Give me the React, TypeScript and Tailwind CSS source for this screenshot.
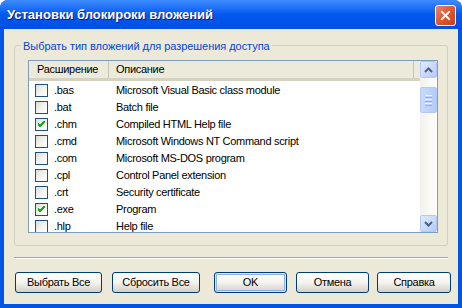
import { X } from 'lucide-react'

const rows = [
  { ext: '.bas', desc: 'Microsoft Visual Basic class module', checked: false },
  { ext: '.bat', desc: 'Batch file', checked: false },
  { ext: '.chm', desc: 'Compiled HTML Help file', checked: true },
  { ext: '.cmd', desc: 'Microsoft Windows NT Command script', checked: false },
  { ext: '.com', desc: 'Microsoft MS-DOS program', checked: false },
  { ext: '.cpl', desc: 'Control Panel extension', checked: false },
  { ext: '.crt', desc: 'Security certificate', checked: false },
  { ext: '.exe', desc: 'Program', checked: true },
  { ext: '.hlp', desc: 'Help file', checked: false },
]

function CheckBox({ checked }: { checked: boolean }) {
  return (
    <div className="w-[13px] h-[13px] border border-[#1C5180] bg-gradient-to-br from-[#DCDCD7] via-[#F2F2EE] to-white flex items-center justify-center">
      {checked && (
        <svg width="7" height="7" viewBox="0 0 7 7">
          <path d="M0 3 L2 5 L7 0 M0 4 L2 6 L7 1 M0 2 L2 4 L7 -1" stroke="#21A121" strokeWidth="1" fill="none" />
        </svg>
      )}
    </div>
  )
}

function XpButton({ label, w, isDefault }: { label: string; w: string; isDefault?: boolean }) {
  return (
    <button
      className={`${w} h-[21px] rounded-[3px] border border-[#003C74] bg-gradient-to-b from-white via-[#F4F3EE] to-[#D6D0C5] text-[11px] text-black leading-none ${
        isDefault ? 'shadow-[inset_0_0_0_1px_#CEE7FF,inset_0_0_0_2px_#8DB2E3]' : ''
      }`}
    >
      {label}
    </button>
  )
}

function ScrollArrow({ down }: { down?: boolean }) {
  return (
    <div className="h-[17px] w-[17px] rounded-[2px] border border-[#B4C8F6] bg-gradient-to-br from-[#E0EBFF] to-[#B3CBF8] flex items-center justify-center">
      <svg width="9" height="6" viewBox="0 0 9 6">
        <path d={down ? 'M1 1 L4.5 4.5 L8 1' : 'M1 5 L4.5 1.5 L8 5'} stroke="#4D6185" strokeWidth="2" fill="none" />
      </svg>
    </div>
  )
}

export default function App() {
  return (
    <div className="w-[462px] h-[308px] flex flex-col bg-[#0055E5] rounded-t-[8px] overflow-hidden font-[Liberation_Sans,Arial,sans-serif]">
      <div className="h-[29px] shrink-0 flex items-center justify-between pl-[7px] pr-[6px] bg-gradient-to-b from-[#3D8CFF] via-[#0058EE] to-[#0050E0]">
        <span className="text-white font-bold text-[13px] [text-shadow:1px_1px_#0A1883]">Установки блокироки вложений</span>
        <div className="w-[21px] h-[21px] mt-[1px] rounded-[3px] border border-white bg-gradient-to-br from-[#E8836A] via-[#E2552F] to-[#C5401E] flex items-center justify-center">
          <X size={15} strokeWidth={3} className="text-white" />
        </div>
      </div>

      <div className="flex-1 mx-[4px] mb-[4px] bg-[#ECE9D8] flex flex-col px-[10px] pt-[16px] text-[11px] tracking-[-0.3px] text-black">
        <div className="relative h-[201px] border border-[#D0D0BF] rounded-[3px] pt-[14px] pl-[13px]">
          <span className="absolute -top-[8px] left-[6px] px-[2px] bg-[#ECE9D8] text-[#0046D5] text-[11px] tracking-[-0.05px]">
            Выбрать тип вложений для разрешения доступа
          </span>

          <div className="w-[410px] h-[173px] border border-[#7F9DB9] bg-white flex overflow-hidden">
            <div className="flex-1 flex flex-col overflow-hidden">
              <div className="h-[20px] shrink-0 flex items-center bg-[#EBEADB] border-b-[3px] border-[#D6D2C2]">
                <div className="w-[80px] h-full flex items-center pl-[8px] border-r border-[#C7C5B2]">Расширение</div>
                <div className="w-[305px] h-full flex items-center pl-[7px] border-r border-[#C7C5B2]">Описание</div>
              </div>
              <div className="h-[1px] shrink-0" />
              {rows.map((r) => (
                <div key={r.ext} className="h-[17px] shrink-0 flex items-center">
                  <div className="w-[80px] flex items-center pl-[6px]">
                    <CheckBox checked={r.checked} />
                    <span className="ml-[6px]">{r.ext}</span>
                  </div>
                  <span className="pl-[7px]">{r.desc}</span>
                </div>
              ))}
            </div>
            <div className="w-[17px] shrink-0 flex flex-col bg-gradient-to-r from-[#F3F1EC] to-[#FEFEFB]">
              <ScrollArrow />
              <div className="flex-1 pt-[9px]">
                <div className="h-[26px] w-[17px] rounded-[2px] border border-[#B4C8F6] bg-gradient-to-r from-[#C9DAFC] to-[#B3CBF8] flex flex-col items-center justify-center gap-[1px]">
                  <div className="w-[7px] h-[1px] bg-[#EEF4FE]" />
                  <div className="w-[7px] h-[1px] bg-[#8CB0F8]" />
                  <div className="w-[7px] h-[1px] bg-[#EEF4FE]" />
                  <div className="w-[7px] h-[1px] bg-[#8CB0F8]" />
                  <div className="w-[7px] h-[1px] bg-[#EEF4FE]" />
                  <div className="w-[7px] h-[1px] bg-[#8CB0F8]" />
                </div>
              </div>
              <ScrollArrow down />
            </div>
          </div>
        </div>

        <div className="mt-[11px] h-[2px] border-t border-[#ACA899] border-b border-b-white" />

        <div className="mt-[13px] flex">
          <div className="ml-[1px]"><XpButton label="Выбрать Все" w="w-[87px]" /></div>
          <div className="ml-[10px]"><XpButton label="Сбросить Все" w="w-[88px]" /></div>
          <div className="ml-[14px]"><XpButton label="OK" w="w-[73px]" isDefault /></div>
          <div className="ml-[9px]"><XpButton label="Отмена" w="w-[73px]" /></div>
          <div className="ml-[8px]"><XpButton label="Справка" w="w-[74px]" /></div>
        </div>
      </div>
    </div>
  )
}
